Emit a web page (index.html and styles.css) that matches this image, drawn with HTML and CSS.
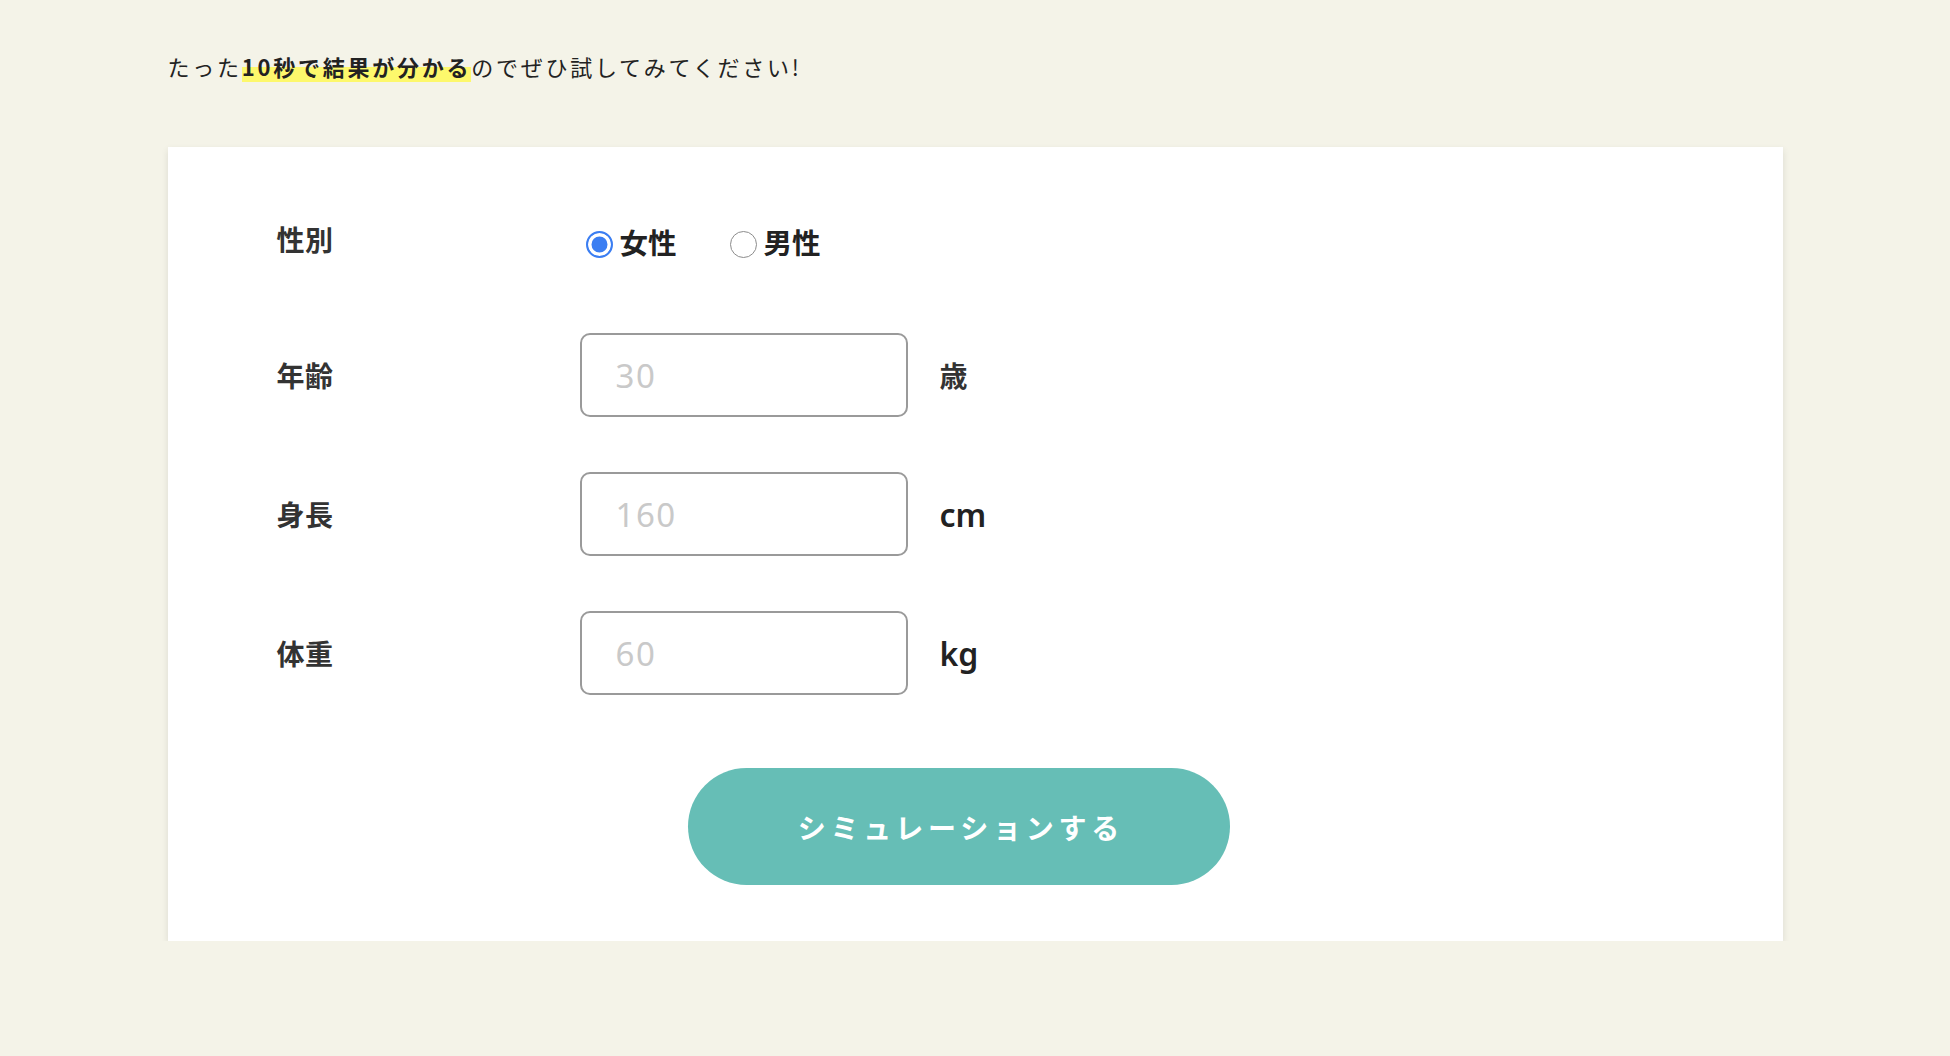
FILE: index.html
```html
<!DOCTYPE html>
<html lang="ja">
<head>
<meta charset="utf-8">
<title>シミュレーション</title>
<link rel="stylesheet" href="styles.css">
</head>
<body>
<main class="wrap">
  <p class="intro">たった<strong class="marker">10秒で結果が分かる</strong>のでぜひ試してみてください!</p>
  <form class="card">
    <div class="row row-gender">
      <div class="label">性別</div>
      <div class="field radios">
        <label class="radio"><input type="radio" name="sex" checked><span>女性</span></label>
        <label class="radio"><input type="radio" name="sex"><span>男性</span></label>
      </div>
    </div>
    <div class="row">
      <div class="label">年齢</div>
      <div class="field"><input class="num" type="text" placeholder="30"><span class="unit unit-ja">歳</span></div>
    </div>
    <div class="row">
      <div class="label">身長</div>
      <div class="field"><input class="num" type="text" placeholder="160"><span class="unit">cm</span></div>
    </div>
    <div class="row">
      <div class="label">体重</div>
      <div class="field"><input class="num" type="text" placeholder="60"><span class="unit">kg</span></div>
    </div>
    <div class="actions">
      <button type="button" class="submit">シミュレーションする</button>
    </div>
  </form>
</main>
</body>
</html>
```

FILE: styles.css
```css
html, body {
  margin: 0;
  padding: 0;
}
body {
  background: #f4f3e8;
  font-family: "Noto Sans CJK JP", "Noto Sans", sans-serif;
  color: #222;
}
.wrap {
  width: 1615px;
  margin: 0 auto;
  padding-top: 49px;
}
.intro {
  margin: 0 0 64px;
  font-size: 22px;
  line-height: 34px;
  letter-spacing: 2.75px;
  color: #222;
}
.marker {
  font-weight: 700;
  background: linear-gradient(transparent 52%, #fdf86c 52%);
}
.card {
  background: #fff;
  box-shadow: 0 3px 7px rgba(0, 0, 0, 0.1);
  padding: 61px 142px 56px 109px;
  display: flex;
  flex-direction: column;
  gap: 55px;
}
.row {
  display: flex;
  align-items: center;
  min-height: 84px;
}
.row-gender {
  min-height: 70px;
}
.label {
  width: 303px;
  flex: none;
  font-size: 28px;
  font-weight: 700;
  color: #333;
  letter-spacing: 0.5px;
}
.row-gender .label {
  margin-top: -8px;
}
.field {
  display: flex;
  align-items: center;
}
.radios {
  gap: 47px;
}
.radio {
  display: inline-flex;
  align-items: center;
  gap: 7px;
  font-size: 28.5px;
  font-weight: 700;
  color: #222;
}
.radio span {
  margin-top: -4px;
}
.radio input {
  appearance: none;
  -webkit-appearance: none;
  width: 27px;
  height: 27px;
  margin: 3px 0 0 6px;
  border: 1.5px solid #8c8c8c;
  border-radius: 50%;
  background: #fff;
  box-sizing: border-box;
}
.radio input:checked {
  border: 2px solid #3b7ef2;
  background: #3b7ef2;
  box-shadow: inset 0 0 0 3.5px #fff;
}
.num {
  width: 328px;
  height: 84px;
  box-sizing: border-box;
  border: 2px solid #9a9a9a;
  border-radius: 10px;
  padding: 0 0 0 34px;
  font-family: "Noto Sans", "Noto Sans CJK JP", sans-serif;
  font-size: 33px;
  letter-spacing: 1.5px;
  color: #333;
  background: #fff;
  outline: none;
}
.num::placeholder {
  color: #c9c9c9;
}
.unit {
  margin-left: 32px;
  font-family: "Noto Sans", "Noto Sans CJK JP", sans-serif;
  font-size: 32px;
  font-weight: 600;
  color: #222;
}
.unit-ja {
  font-family: "Noto Sans CJK JP", sans-serif;
  font-size: 28px;
  font-weight: 700;
  color: #333;
}
.actions {
  display: flex;
  justify-content: center;
  margin-top: 18px;
}
.submit {
  width: 542px;
  height: 117px;
  border: none;
  border-radius: 59px;
  background: #66beb6;
  color: #fff;
  font-family: "Noto Sans CJK JP", sans-serif;
  font-size: 28px;
  font-weight: 700;
  letter-spacing: 0.17em;
  padding: 0 0 0 0.17em;
  cursor: pointer;
}
```
